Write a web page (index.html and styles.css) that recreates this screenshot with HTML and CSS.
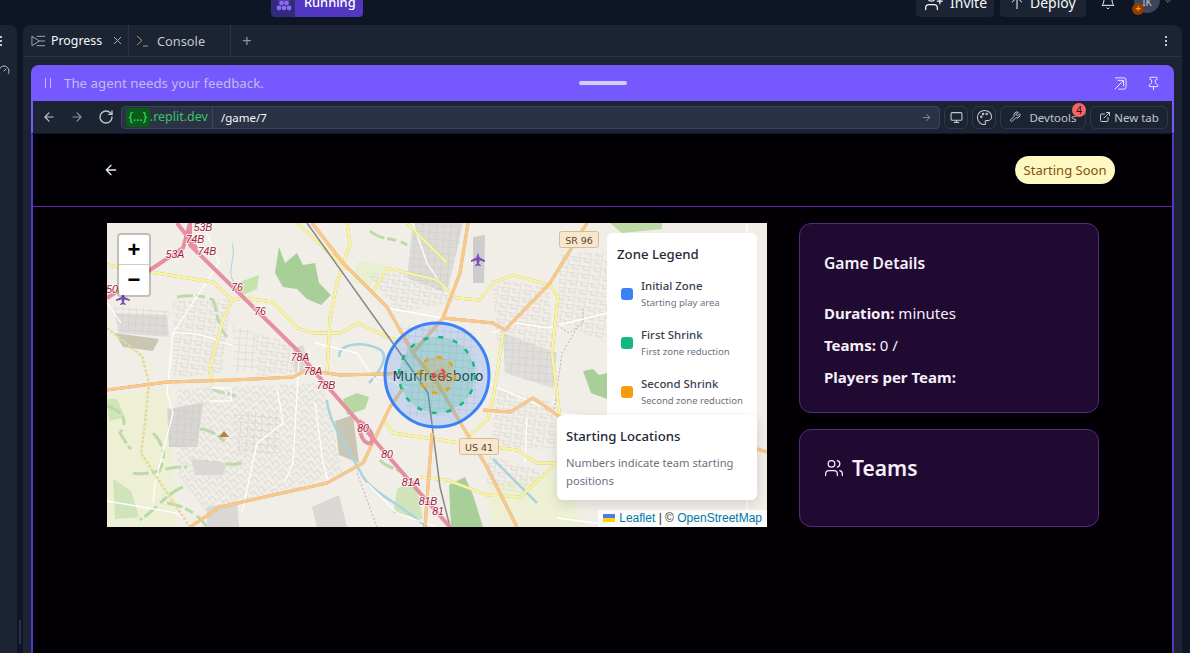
FILE: index.html
```html
<!DOCTYPE html>
<html lang="en">
<head>
    <meta charset="UTF-8">
    <meta name="viewport" content="width=device-width, initial-scale=1.0">
    <title>Game 7</title>
    <link rel="stylesheet" href="styles.css">
</head>
<body>
    <header class="topbar">
        <div class="run-button">
            <span class="run-icon">
                <svg width="16" height="16" viewBox="0 0 16 16" fill="#8a6cf5"><circle cx="3" cy="3" r="2.4"/><circle cx="8" cy="3" r="2.4"/><circle cx="13" cy="3" r="2.4"/><circle cx="5.5" cy="8" r="2.4"/><circle cx="10.5" cy="8" r="2.4"/><circle cx="3" cy="13" r="2.4"/><circle cx="8" cy="13" r="2.4"/><circle cx="13" cy="13" r="2.4"/></svg>
            </span>
            <span class="run-label">Running</span>
        </div>
        <div class="top-actions">
            <div class="top-button invite-button">
                <svg class="icon thin" width="20" height="20" viewBox="0 0 24 24"><path d="M16 21v-2a4 4 0 0 0-4-4H6a4 4 0 0 0-4 4v2"/><circle cx="9" cy="7" r="4"/><path d="M19 8v6M22 11h-6"/></svg>
                <span>Invite</span>
            </div>
            <div class="top-button deploy-button">
                <svg class="icon thin" width="16" height="18" viewBox="0 0 24 24"><path d="M12 22V8M5 12l7-7 7 7M3 5h4M17 5h4"/></svg>
                <span>Deploy</span>
            </div>
            <svg class="icon thin bell" width="16" height="16" viewBox="0 0 24 24"><path d="M6 8a6 6 0 0 1 12 0c0 7 3 9 3 9H3s3-2 3-9"/><path d="M10.3 21a1.94 1.94 0 0 0 3.4 0"/></svg>
            <div class="avatar"><span>IK</span><i class="avatar-dot">+</i></div>
            <svg class="icon chevron" width="10" height="10" viewBox="0 0 24 24"><path d="M6 9l6 6 6-6"/></svg>
        </div>
    </header>

    <div class="workspace">
        <aside class="side-panel">
            <div class="side-dots"><i></i><i></i><i></i></div>
            <svg class="icon side-gauge" width="12" height="12" viewBox="0 0 24 24"><path d="M12 14l4-4"/><path d="M3.3 19a10 10 0 1 1 17.4 0"/></svg>
        </aside>
        <div class="side-gutter"><i class="scroll-thumb"></i></div>

        <main class="main-panel">
            <nav class="tabs">
                <div class="tab tab-progress">
                    <svg class="tab-icon" width="15" height="12" viewBox="0 0 16 12"><path d="M1 1l8 5-8 5zM6 1h9M9 6h6M6 11h9"/></svg>
                    <span class="tab-name active">Progress</span>
                    <svg class="tab-close" width="9" height="9" viewBox="0 0 9 9"><path d="M1 1l7 7M8 1L1 8"/></svg>
                </div>
                <div class="tab tab-console">
                    <svg class="tab-icon console-icon" width="12" height="12" viewBox="0 0 12 12"><path d="M1 1l5 4.5L1 10M7 11h5"/></svg>
                    <span class="tab-name">Console</span>
                </div>
                <div class="tab-add">+</div>
                <div class="tab-menu"><i></i><i></i><i></i></div>
            </nav>

            <section class="preview">
                <div class="agent-bar">
                    <svg class="pause" width="8" height="12" viewBox="0 0 8 12"><path d="M1.5 1v10M6.5 1v10"/></svg>
                    <span class="agent-text">The agent needs your feedback.</span>
                    <i class="agent-grip"></i>
                    <svg class="icon thin agent-open" width="15" height="15" viewBox="0 0 24 24"><path d="M4 3h13a4 4 0 0 1 4 4v10a4 4 0 0 1-4 4H9"/><path d="M3 21L17 7M8 7h9v9"/></svg>
                    <svg class="icon thin agent-pin" width="15" height="15" viewBox="0 0 24 24"><path d="M12 17v5"/><path d="M9 10.76a2 2 0 0 1-1.11 1.79l-1.78.9A2 2 0 0 0 5 15.24V16a1 1 0 0 0 1 1h12a1 1 0 0 0 1-1v-.76a2 2 0 0 0-1.11-1.79l-1.78-.9A2 2 0 0 1 15 10.76V7a1 1 0 0 1 1-1 2 2 0 0 0 0-4H8a2 2 0 0 0 0 4 1 1 0 0 1 1 1z"/></svg>
                </div>

                <div class="browser-bar">
                    <svg class="icon nav" width="14" height="14" viewBox="0 0 24 24"><path d="M19 12H5M12 19l-7-7 7-7"/></svg>
                    <svg class="icon nav dim" width="14" height="14" viewBox="0 0 24 24"><path d="M5 12h14M12 5l7 7-7 7"/></svg>
                    <svg class="icon nav" width="16" height="16" viewBox="0 0 24 24"><path d="M21 12a9 9 0 1 1-9-9c2.52 0 4.93 1 6.74 2.74L21 8"/><path d="M21 3v5h-5"/></svg>
                    <div class="url-box">
                        <span class="url-chip">{...}</span>
                        <span class="url-host">.replit.dev</span>
                        <span class="url-path">/game/7</span>
                        <svg class="icon url-go" width="11" height="11" viewBox="0 0 24 24"><path d="M5 12h14M12 5l7 7-7 7"/></svg>
                    </div>
                    <div class="bar-button square">
                        <svg class="icon" width="13" height="13" viewBox="0 0 24 24"><rect x="2" y="3" width="20" height="14" rx="2"/><path d="M8 21h8M12 17v4"/></svg>
                    </div>
                    <div class="bar-button square">
                        <svg class="icon thin" width="17" height="17" viewBox="0 0 24 24"><path d="M12 2C6.5 2 2 6.5 2 12s4.5 10 10 10c.926 0 1.648-.746 1.648-1.688 0-.437-.18-.835-.437-1.125-.29-.289-.438-.652-.438-1.125a1.64 1.64 0 0 1 1.668-1.668h1.996c3.051 0 5.555-2.503 5.555-5.554C21.965 6.012 17.461 2 12 2z"/><circle cx="7.5" cy="11" r="1"/><circle cx="10" cy="7" r="1"/><circle cx="15" cy="7" r="1"/></svg>
                    </div>
                    <div class="bar-button devtools">
                        <svg class="icon" width="12" height="12" viewBox="0 0 24 24"><path d="M14.7 6.3a1 1 0 0 0 0 1.4l1.6 1.6a1 1 0 0 0 1.4 0l3.77-3.77a6 6 0 0 1-7.94 7.94l-6.91 6.91a2.12 2.12 0 0 1-3-3l6.91-6.91a6 6 0 0 1 7.94-7.94l-3.76 3.76z"/></svg>
                        <span>Devtools</span>
                        <b class="count">4</b>
                    </div>
                    <div class="bar-button newtab">
                        <svg class="icon" width="12" height="12" viewBox="0 0 24 24"><path d="M18 13v6a2 2 0 0 1-2 2H5a2 2 0 0 1-2-2V8a2 2 0 0 1 2-2h6M15 3h6v6M10 14L21 3"/></svg>
                        <span>New tab</span>
                    </div>
                </div>

                <div class="webview">
                    <div class="game-header">
                        <svg class="back" width="16" height="16" viewBox="0 0 24 24"><path d="M19 12H5M12 19l-7-7 7-7"/></svg>
                        <span class="status-badge">Starting Soon</span>
                    </div>

                    <div class="game-body">
                        <div class="map">
                            <svg class="map-tiles" width="660" height="304" viewBox="0 0 660 304">
                                <defs>
                                    <pattern id="streets" width="11" height="8" patternUnits="userSpaceOnUse" patternTransform="rotate(8)">
                                        <path d="M0 0H11M0 0V8M5 0V4M5 4H11" stroke="#d2d0cc" stroke-width=".8" fill="none"/>
                                    </pattern>
                                    <pattern id="streets2" width="9" height="11" patternUnits="userSpaceOnUse" patternTransform="rotate(-38)">
                                        <path d="M0 0H9M0 0V11M0 5H5M5 5V11" stroke="#d2d0cc" stroke-width=".8" fill="none"/>
                                    </pattern>
                                    <pattern id="streets3" width="7" height="7" patternUnits="userSpaceOnUse" patternTransform="rotate(4)">
                                        <path d="M0 0H7M0 0V7" stroke="#c4c2bf" stroke-width=".7" fill="none"/>
                                    </pattern>
                                </defs>
                                <g class="tiles">
                                    <rect width="660" height="304" fill="#f1eee8"/>

                                    <!-- farmland and woods -->
                                    <path fill="#eef0d5" d="M0 172L62 165L70 304H0z"/>
                                    <path fill="#eef0d5" d="M382 262L450 250L480 304H382z"/>
                                    <path fill="#e8f0cf" d="M250 38L280 42L262 64L246 60z"/>
                                    <path fill="#a9cf99" d="M172 24L178 40L190 30L196 42L208 40L212 60L224 72L214 82L200 76L190 66L176 64L168 50z"/>
                                    <path fill="#c6e2ad" d="M130 60L152 52L150 66L136 72z"/>
                                    <path fill="#bcd9a6" d="M503 0H555V6L515 10z"/>
                                    <path fill="#a9cf99" d="M476 148L486 146L492 152L500 150V176L484 170z"/>
                                    <path fill="#a9cf99" d="M342 262L358 254L366 272L376 304H344z"/>
                                    <path fill="#cfe4b8" d="M0 176H10L18 194L2 198z"/>
                                    <path fill="#cfe4b8" d="M6 256L24 268L32 294L8 296z"/>
                                    <path fill="#b8d8a2" d="M236 176L250 170L262 174L258 186L240 192z"/>
                                    <path fill="#cfe4b8" d="M290 266L308 256L316 296L286 290z"/>

                                    <g class="wood-strips">
                                        <path d="M70 74C90 70 104 76 106 77C112 90 108 100 120 114"/>
                                        <path d="M0 183C10 186 24 194 13 210C18 218 20 222 24 226"/>
                                        <path d="M86 240C104 236 120 244 136 240"/>
                                        <path d="M26 250C44 254 60 242 80 244"/>
                                        <path d="M76 264C60 270 52 284 33 297"/>
                                        <path d="M93 206C104 206 112 214 120 220"/>
                                        <path d="M103 164C112 172 120 168 130 174"/>
                                        <path d="M273 237C280 246 292 244 300 254"/>
                                        <path d="M46 210C56 220 62 236 50 250"/>
                                        <path d="M60 280C76 282 90 290 100 304"/>
                                        <path d="M330 4C334 14 344 14 352 20"/>
                                        <path d="M263 8C274 18 288 14 300 22"/>
                                    </g>

                                    <!-- built up areas -->
                                    <path fill="#dddbd7" d="M8 90L60 92L62 114L12 110z"/>
                                    <path fill="url(#streets3)" d="M8 82L62 88L60 112L10 108z"/>
                                    <path fill="#c9c7b4" d="M8 110L52 116L46 128L16 124z"/>
                                    <path fill="url(#streets)" d="M66 78L126 76L116 150L66 155z"/>
                                    <path fill="url(#streets3)" d="M126 100L148 110L150 146L128 150z"/>
                                    <path fill="url(#streets)" d="M148 110L186 120L200 148L150 154z"/>
                                    <path fill="url(#streets2)" d="M70 166L216 160L236 250L100 292L70 250z"/>
                                    <path fill="url(#streets3)" d="M126 190L172 188L174 230L130 232z"/>
                                    <path fill="url(#streets)" d="M260 50L333 50L350 78L290 90z"/>
                                    <path fill="#dddbd7" d="M306 0H356L340 70L300 55z"/>
                                    <path fill="url(#streets3)" d="M306 0H356L340 70L300 55z"/>
                                    <path fill="url(#streets)" d="M385 56L442 64L446 135L390 120z"/>
                                    <path fill="url(#streets3)" d="M293 100L368 110L372 190L300 195z"/>
                                    <path fill="url(#streets)" d="M390 166L446 180L448 226L385 224z"/>
                                    <path fill="url(#streets)" d="M380 232L440 250L410 270L380 262z"/>
                                    <path fill="#e0dedb" d="M396 110L450 130L446 165L398 150z"/>
                                    <path fill="url(#streets3)" d="M396 110L450 130L446 165L398 150z"/>
                                    <path fill="url(#streets)" d="M452 30L500 30V120L452 100z"/>
                                    <path fill="#c9c7b4" d="M228 198L246 192L252 240L232 232z"/>
                                    <path fill="#d8d6d2" d="M60 186L96 180L90 224L62 224z"/>
                                    <path fill="url(#streets3)" d="M60 186L96 180L90 224L62 224z"/>
                                    <path fill="#dad8d4" d="M205 284L232 272L240 304H210z"/>
                                    <path fill="#dad8d4" d="M100 284L130 280L132 304H100z"/>
                                    <path fill="#dad8d4" d="M84 236L120 240L116 252L88 252z"/>
                                    <path fill="#dad8d4" d="M186 126L196 122L204 150L188 150z"/>
                                    <path fill="#cdcdcd" d="M366 14L378 12L377 60L366 60z"/>

                                    <!-- water -->
                                    <path class="water" d="M232 134C232 120 255 118 272 126C284 132 272 150 262 160"/>
                                    <path class="water" d="M220 177C222 200 240 225 254 250C262 268 286 276 320 304"/>
                                    <path class="water thin-water" d="M125 20C130 35 118 50 128 60"/>
                                    <path class="water" d="M386 236L430 280"/>

                                    <!-- small roads -->
                                    <g class="road-white">
                                        <path d="M66 110C100 108 110 120 125 122"/>
                                        <path d="M66 110L60 170L66 190L48 260L46 280"/>
                                        <path d="M0 278L70 290L86 304"/>
                                        <path d="M96 0L112 40L66 110"/>
                                        <path d="M192 135L186 240L178 258"/>
                                        <path d="M170 165L176 200L150 220L135 290"/>
                                        <path d="M208 180L216 240L222 260"/>
                                        <path d="M208 120L250 130L270 160"/>
                                        <path d="M280 85L335 95"/>
                                        <path d="M0 80L14 100"/>
                                        <path d="M263 150L300 165"/>
                                        <path d="M385 110L410 100L440 105L500 90"/>
                                        <path d="M380 160L450 190L500 195"/>
                                        <path d="M420 195L418 240"/>
                                        <path d="M306 0L320 40L340 70"/>
                                        <path d="M260 260L290 290L330 304"/>
                                        <path d="M450 295L520 304M640 0V304"/>
                                        <path d="M103 165H124V178H103"/>
                                    </g>
                                    <path class="track" d="M447 100L462 110L476 100L476 85"/>
                                    <path class="track" d="M447 190L455 130L470 105M250 250L270 304"/>

                                    <!-- trunk and secondary roads -->
                                    <g class="road-yellow">
                                        <path d="M0 42L43 49L106 59L125 77L136 75L166 79L190 105L206 110L233 110L251 100L280 114L293 118"/>
                                        <path d="M125 77L116 97L103 144L106 162"/>
                                        <path d="M240 0L243 20L230 60L223 94L220 150"/>
                                        <path d="M266 69L280 45L330 57L350 75L373 77L386 60L406 52L443 62L451 74L445 130L453 194"/>
                                        <path d="M396 110L386 177L380 197L363 212"/>
                                        <path d="M276 197L286 210L346 219L410 227L430 240L450 240L413 274L380 272L340 257L313 254"/>
                                        <path d="M300 0L340 40"/>
                                        <path d="M190 0L240 46"/>
                                    </g>
                                    <path class="road-yellow-dash" d="M0 105L35 133L42 160L38 200L34 230L60 270L83 304"/>

                                    <!-- railway -->
                                    <path class="rail" d="M200 0L293 130L321 170L333 264L343 304"/>

                                    <!-- primary roads -->
                                    <g class="road-orange">
                                        <path d="M0 167L60 159L126 157L186 154L200 147L233 152L276 151L300 150"/>
                                        <path d="M205 0L236 40L280 84L306 130L330 160L356 204L380 244L410 304"/>
                                        <path d="M361 0L353 50L336 95L306 130"/>
                                        <path d="M336 95L386 100L398 107L443 60L480 0"/>
                                        <path d="M83 304L113 284L220 260L256 240L283 184L296 165"/>
                                        <path d="M325 210L318 304"/>
                                        <path d="M376 187L403 189L426 175L453 194"/>
                                        <path d="M650 226L660 229"/>
                                    </g>

                                    <!-- motorway -->
                                    <g class="road-motorway">
                                        <path d="M0 75L43 47L76 25L83 0"/>
                                        <path d="M83 0L83 22L190 127L206 147L256 204L313 270L343 304"/>
                                        <path d="M70 0L90 26"/>
                                        <path d="M252 198C262 204 268 212 264 220C256 222 252 210 252 198"/>
                                    </g>

                                    <!-- symbols -->
                                    <path class="plane" d="M371 30l1.6 4.5 5.4 2.8v1.6l-5.4-1.6-.6 3.5 1.8 1.500v1l-2.800-.8-2.800.8v-1l1.800-1.500-.6-3.500-5.400 1.600v-1.600l5.400-2.800z"/>
                                    <path class="plane" d="M16 70l1.6 4 5.4 2.500v1.500l-5.400-1.500-.6 3 1.800 1.500v1l-2.800-.8-2.800.8v-1l1.800-1.500-.6-3-5.400 1.500v-1.500l5.400-2.500z"/>
                                    <path fill="#b98044" d="M117 208l5 6h-10z"/>
                                </g>

                                <g class="junction">
                                    <text x="96" y="8">53B</text>
                                    <text x="88" y="20">74B</text>
                                    <text x="100" y="32">74B</text>
                                    <text x="68" y="35">53A</text>
                                    <text x="5" y="70">50</text>
                                    <text x="130" y="68">76</text>
                                    <text x="153" y="92">76</text>
                                    <text x="193" y="138">78A</text>
                                    <text x="206" y="152">78A</text>
                                    <text x="219" y="166">78B</text>
                                    <text x="256" y="209">80</text>
                                    <text x="280" y="235">80</text>
                                    <text x="304" y="263">81A</text>
                                    <text x="321" y="282">81B</text>
                                    <text x="331" y="292">81</text>
                                </g>

                                <g class="shield">
                                    <rect x="452.5" y="8.5" width="39" height="16" rx="2"/>
                                    <text x="472" y="20.5">SR 96</text>
                                    <rect x="352.5" y="215.5" width="39" height="16" rx="2"/>
                                    <text x="372" y="227.5">US 41</text>
                                </g>

                                <text class="city" x="331" y="158">Murfreesboro</text>

                                <circle class="zone-blue" cx="330" cy="152" r="52"/>
                                <circle class="zone-green" cx="330" cy="152" r="38"/>
                                <circle class="zone-orange" cx="330" cy="152" r="18"/>
                                <circle class="zone-red" cx="332" cy="152" r="6"/>
                            </svg>

                            <div class="zoom-control">
                                <div class="zoom-btn">+</div>
                                <div class="zoom-btn">&minus;</div>
                            </div>

                            <div class="legend">
                                <h3>Zone Legend</h3>
                                <div class="legend-row">
                                    <i class="swatch swatch-blue"></i>
                                    <div><p class="legend-name">Initial Zone</p><p class="legend-note">Starting play area</p></div>
                                </div>
                                <div class="legend-row">
                                    <i class="swatch swatch-green"></i>
                                    <div><p class="legend-name">First Shrink</p><p class="legend-note">First zone reduction</p></div>
                                </div>
                                <div class="legend-row">
                                    <i class="swatch swatch-orange"></i>
                                    <div><p class="legend-name">Second Shrink</p><p class="legend-note">Second zone reduction</p></div>
                                </div>
                            </div>

                            <div class="locations">
                                <h3>Starting Locations</h3>
                                <p>Numbers indicate team starting positions</p>
                            </div>

                            <div class="attribution">
                                <svg width="12" height="8" viewBox="0 0 12 8"><rect width="12" height="4" fill="#4c7be1"/><rect y="4" width="12" height="4" fill="#ffd500"/></svg>
                                <a>Leaflet</a> <span class="attr-sep">|</span> &copy; <a>OpenStreetMap</a>
                            </div>
                        </div>

                        <div class="side-cards">
                            <div class="card details-card">
                                <h2>Game Details</h2>
                                <p><strong>Duration:</strong> minutes</p>
                                <p><strong>Teams:</strong> 0 /</p>
                                <p><strong>Players per Team:</strong></p>
                            </div>
                            <div class="card teams-card">
                                <h2>
                                    <svg class="icon thin" width="20" height="20" viewBox="0 0 24 24"><path d="M16 21v-2a4 4 0 0 0-4-4H6a4 4 0 0 0-4 4v2"/><circle cx="9" cy="7" r="4"/><path d="M22 21v-2a4 4 0 0 0-3-3.87"/><path d="M16 3.13a4 4 0 0 1 0 7.75"/></svg>
                                    Teams
                                </h2>
                            </div>
                        </div>
                    </div>
                </div>
            </section>
        </main>
    </div>
</body>
</html>
```

FILE: styles.css
```css
* {
    box-sizing: border-box;
}
body {
    font-family: 'Noto Sans', 'Open Sans', sans-serif;
    background-color: #0e1525;
    color: #f5f9fc;
    margin: 0;
    width: 100vw;
    height: 100vh;
    overflow: hidden;
    display: flex;
    flex-direction: column;
}
h2, h3, p {
    margin: 0;
}
.icon {
    fill: none;
    stroke: currentColor;
    stroke-width: 2;
    stroke-linecap: round;
    stroke-linejoin: round;
    flex-shrink: 0;
}
.icon.thin {
    stroke-width: 1.5;
}

/* top bar, cut off by the window edge */
.topbar {
    height: 25px;
    flex-shrink: 0;
    overflow: hidden;
    display: flex;
    align-items: flex-end;
    padding: 0 17px 8px 271px;
}
.run-button {
    display: flex;
    height: 30px;
    border-radius: 4px;
    overflow: hidden;
    flex-shrink: 0;
}
.run-icon {
    width: 24px;
    background-color: #332a7c;
    display: flex;
    align-items: center;
    justify-content: center;
}
.run-icon svg {
    margin-top: 1px;
    margin-left: 1px;
}
.run-label {
    width: 68px;
    background-color: #5237c2;
    color: #fff;
    font-size: 12.8px;
    font-weight: 500;
    line-height: 30px;
    padding-left: 9px;
}
.top-actions {
    margin-left: auto;
    display: flex;
    align-items: flex-end;
}
.top-button {
    height: 30px;
    background-color: #1c2333;
    border-radius: 4px;
    display: flex;
    align-items: center;
    font-size: 14px;
}
.invite-button {
    width: 78px;
    gap: 6px;
    padding-left: 8px;
}
.deploy-button {
    width: 86px;
    gap: 5px;
    padding-left: 9px;
    margin-left: 6px;
}
.bell {
    margin: 0 0 7px 14px;
}
.avatar {
    position: relative;
    width: 26px;
    height: 26px;
    border-radius: 50%;
    background-color: #3c445c;
    color: #c2c8cc;
    font-size: 10px;
    line-height: 30px;
    text-align: center;
    margin-left: 18px;
    margin-bottom: 4px;
}
.avatar-dot {
    position: absolute;
    left: -2px;
    top: 16px;
    width: 12px;
    height: 12px;
    border-radius: 50%;
    background-color: #8f3d00;
    color: #ff9a2e;
    font-style: normal;
    font-size: 10px;
    font-weight: 700;
    line-height: 11px;
}
.chevron {
    color: #8a92a8;
    margin: 0 0 11px 3px;
}

.workspace {
    flex: 1;
    min-height: 0;
    display: flex;
    padding-right: 8px;
}
.side-panel {
    width: 17px;
    background-color: #1c2333;
    border-radius: 0 8px 0 0;
    flex-shrink: 0;
    overflow: hidden;
    padding-top: 11px;
}
.side-dots {
    display: flex;
    flex-direction: column;
    gap: 2px;
}
.side-dots i {
    width: 2px;
    height: 2px;
    background-color: #c2c8cc;
}
.side-gauge {
    display: block;
    margin: 18px 0 0 -2px;
    color: #c2c8cc;
}
.side-gutter {
    width: 6px;
    flex-shrink: 0;
    position: relative;
}
.scroll-thumb {
    position: absolute;
    left: 2px;
    top: 595px;
    width: 2px;
    height: 24px;
    background-color: #2b3245;
}

.main-panel {
    flex: 1;
    min-width: 0;
    background-color: #1c2333;
    border-radius: 8px 8px 0 0;
    display: flex;
    flex-direction: column;
}
.tabs {
    height: 32px;
    flex-shrink: 0;
    display: flex;
    border-bottom: 1px solid #2b3245;
    font-size: 12.8px;
}
.tab {
    display: flex;
    align-items: center;
    border-right: 1px solid #2b3245;
}
.tab-progress {
    width: 106px;
    padding-left: 8px;
}
.tab-console {
    width: 102px;
    padding-left: 7px;
}
.tab-icon {
    fill: none;
    stroke: #a5adc0;
    stroke-width: 1;
    margin-right: 5px;
}
.console-icon {
    stroke: #a89a70;
    margin-right: 9px;
}
.tab-name {
    color: #c2c8cc;
}
.tab-name.active {
    color: #f5f9fc;
    font-size: 12.4px;
}
.tab-close {
    fill: none;
    stroke: #a5adc0;
    margin-left: 11px;
}
.tab-add {
    color: #8a92a8;
    font-size: 17px;
    line-height: 31px;
    margin-left: 11px;
}
.tab-menu {
    margin-left: auto;
    width: 32px;
    display: flex;
    flex-direction: column;
    align-items: center;
    justify-content: center;
    gap: 2px;
}
.tab-menu i {
    width: 2px;
    height: 2px;
    background-color: #c2c8cc;
}

.preview {
    flex: 1;
    min-height: 0;
    margin: 8px 8px 0;
    border-radius: 8px 8px 0 0;
    background-color: #7559ff;
    display: flex;
    flex-direction: column;
}
.agent-bar {
    height: 36px;
    flex-shrink: 0;
    display: flex;
    align-items: center;
    padding-left: 13px;
    position: relative;
}
.pause {
    fill: none;
    stroke: #c6bcf5;
    margin-right: 12px;
}
.agent-text {
    color: #c3b9ee;
    font-size: 13.3px;
}
.agent-grip {
    position: absolute;
    left: 548px;
    top: 16px;
    width: 48px;
    height: 4px;
    border-radius: 2px;
    background-color: #d4ccfa;
}
.agent-open {
    margin-left: auto;
    color: #f0eeff;
}
.agent-pin {
    margin: 0 13px 0 18px;
    color: #f0eeff;
}
.browser-bar {
    height: 33px;
    flex-shrink: 0;
    margin: 0 2px;
    background-color: #1c2333;
    border-bottom: 1px solid #0e1525;
    display: flex;
    align-items: center;
    padding: 0 4px 0 9px;
}
.nav {
    color: #c2c8cc;
    margin-right: 14px;
}
.nav.dim {
    color: #8a92a8;
}
.nav:nth-child(3) {
    margin-right: 7px;
}
.url-box {
    flex: 1;
    min-width: 0;
    height: 23px;
    background-color: #2b3245;
    border: 1px solid #3c445c;
    border-radius: 4px;
    display: flex;
    align-items: center;
    font-size: 12.5px;
    padding-left: 4px;
}
.url-chip {
    background-color: #0b5c1a;
    color: #3fe06a;
    border-radius: 3px;
    height: 19px;
    line-height: 18px;
    padding: 0 2.5px;
    font-size: 12px;
}
.url-host {
    color: #3ac46a;
    padding-right: 4px;
    border-right: 1px solid #3c445c;
    height: 21px;
    line-height: 20px;
}
.url-path {
    color: #f5f9fc;
    margin-left: 8px;
    font-size: 11.5px;
}
.url-go {
    margin-left: auto;
    margin-right: 7px;
    color: #8a92a8;
}
.bar-button {
    height: 23px;
    border: 1px solid #2f374c;
    border-radius: 6px;
    display: flex;
    align-items: center;
    justify-content: center;
    color: #c2c8cc;
    font-size: 11.5px;
    margin-left: 4px;
    position: relative;
}
.bar-button.square {
    width: 24px;
}
.devtools {
    width: 86px;
    gap: 8px;
}
.newtab {
    width: 78px;
    gap: 3px;
}
.count {
    position: absolute;
    right: -1px;
    top: -4px;
    width: 14px;
    height: 14px;
    border-radius: 50%;
    background-color: #f56565;
    color: #2a0d10;
    font-size: 10px;
    font-weight: 400;
    line-height: 14px;
    text-align: center;
}

.webview {
    flex: 1;
    min-height: 0;
    background-color: #020005;
    border-left: 2px solid #5138c8;
    border-right: 2px solid #5138c8;
    margin-top: -1px;
    border-top: 1px solid #0e1525;
}
.game-header {
    height: 73px;
    border-bottom: 1px solid #6b21a8;
    display: flex;
    align-items: center;
    justify-content: space-between;
    padding: 0 57px 0 70px;
}
.back {
    fill: none;
    stroke: #e8e6f0;
    stroke-width: 2;
    stroke-linecap: round;
    stroke-linejoin: round;
}
.status-badge {
    background-color: #fef9c3;
    color: #854d0e;
    border-radius: 14px;
    height: 28px;
    width: 100px;
    font-size: 13px;
    line-height: 28px;
    text-align: center;
}
.game-body {
    display: flex;
    gap: 32px;
    padding: 16px 0 0 74px;
}

/* map */
.map {
    width: 660px;
    height: 304px;
    position: relative;
    overflow: hidden;
    flex-shrink: 0;
    background-color: #f1eee8;
}
.map-tiles {
    display: block;
}
.tiles {
    filter: blur(.3px);
}
.wood-strips path {
    fill: none;
    stroke: #bcdaa8;
    stroke-width: 3;
    stroke-dasharray: 16 3 9 5;
    stroke-linejoin: round;
}
.water {
    fill: none;
    stroke: #aad3df;
    stroke-width: 2.5;
}
.water.thin-water {
    stroke-width: 1;
}
.road-white path {
    fill: none;
    stroke: #fff;
    stroke-width: 1.3;
}
.track {
    fill: none;
    stroke: #c9a6c4;
    stroke-width: 1;
    stroke-dasharray: 2 2;
}
.road-yellow {
    filter: drop-shadow(0 0 .4px #b0aa70);
}
.road-yellow path {
    fill: none;
    stroke: #f7f3a5;
    stroke-width: 2.8;
    stroke-linejoin: round;
}
.road-yellow-dash {
    fill: none;
    stroke: #e0dc9a;
    stroke-width: 2.5;
    stroke-dasharray: 3 1.5;
}
.rail {
    fill: none;
    stroke: #888;
    stroke-width: 1.5;
}
.road-orange {
    filter: drop-shadow(0 0 .4px #c89a60);
}
.road-orange path {
    fill: none;
    stroke: #f9c88c;
    stroke-width: 3;
    stroke-linejoin: round;
}
.road-motorway path {
    fill: none;
    stroke: #e58fa1;
    stroke-width: 4;
    stroke-linejoin: round;
}
.plane {
    fill: #7a4fb0;
}
.junction text {
    font-family: 'Liberation Sans', Arial, sans-serif;
    font-size: 10.5px;
    font-style: italic;
    fill: #a0163a;
    stroke: #fff;
    stroke-width: 2;
    stroke-opacity: .75;
    paint-order: stroke;
    text-anchor: middle;
}
.shield rect {
    fill: #f6e7cd;
    stroke: #d8bd94;
}
.shield text {
    font-family: 'DejaVu Sans', sans-serif;
    font-size: 9.5px;
    fill: #5a4630;
    text-anchor: middle;
}
.city {
    font-family: 'DejaVu Sans', sans-serif;
    font-size: 13.7px;
    fill: #222;
    stroke: #fff;
    stroke-width: 2;
    stroke-opacity: .6;
    paint-order: stroke;
    text-anchor: middle;
}
.zone-blue {
    fill: rgba(59, 130, 246, .22);
    stroke: #3b82f6;
    stroke-width: 3;
}
.zone-green {
    fill: rgba(16, 185, 129, .18);
    stroke: #10b981;
    stroke-width: 2.5;
    stroke-dasharray: 5 10;
}
.zone-orange {
    fill: rgba(245, 158, 11, .2);
    stroke: #f59e0b;
    stroke-width: 2.5;
    stroke-dasharray: 5 9;
}
.zone-red {
    fill: rgba(239, 68, 68, .2);
    stroke: #ef4444;
    stroke-width: 2.5;
    stroke-dasharray: 5 10;
}
.zoom-control {
    position: absolute;
    left: 10px;
    top: 10px;
    width: 34px;
    border: 2px solid rgba(0, 0, 0, .2);
    border-radius: 4px;
    background-clip: padding-box;
}
.zoom-btn {
    height: 30px;
    background-color: #fff;
    color: #000;
    font-family: 'Liberation Sans', Arial, sans-serif;
    font-size: 22px;
    font-weight: 700;
    line-height: 29px;
    text-align: center;
}
.zoom-btn:first-child {
    border-bottom: 1px solid #ccc;
    border-radius: 2px 2px 0 0;
}
.zoom-btn:last-child {
    border-radius: 0 0 2px 2px;
}
.legend {
    position: absolute;
    left: 500px;
    top: 10px;
    width: 150px;
    height: 210px;
    background-color: #fff;
    border-radius: 6px;
    padding: 12px 10px;
    color: #374151;
}
.legend h3 {
    color: #1f2937;
    font-size: 13.2px;
    font-weight: 500;
    line-height: 18px;
    margin-bottom: 6px;
}
.legend-row {
    display: flex;
    align-items: center;
    gap: 8px;
    height: 49px;
    padding-left: 4px;
}
.swatch {
    width: 12px;
    height: 12px;
    border-radius: 3px;
    flex-shrink: 0;
}
.swatch-blue {
    background-color: #3b82f6;
}
.swatch-green {
    background-color: #10b981;
}
.swatch-orange {
    background-color: #f59e0b;
}
.legend-name {
    font-size: 11.4px;
    font-weight: 500;
    line-height: 17px;
}
.legend-note {
    font-size: 9.5px;
    color: #6b7280;
    line-height: 17px;
}
.locations {
    position: absolute;
    left: 450px;
    top: 192px;
    width: 200px;
    height: 85px;
    background-color: #fff;
    border-radius: 6px;
    padding: 12px 9px;
    box-shadow: 0 4px 12px rgba(0, 0, 0, .12);
}
.locations h3 {
    color: #1f2937;
    font-size: 13.2px;
    font-weight: 500;
    line-height: 18px;
    margin-bottom: 9px;
}
.locations p {
    color: #6b7280;
    font-size: 11.2px;
    line-height: 18px;
}
.attribution {
    position: absolute;
    right: 0;
    bottom: 0;
    background-color: rgba(255, 255, 255, .8);
    color: #333;
    font-family: 'Liberation Sans', Arial, sans-serif;
    font-size: 12px;
    line-height: 17px;
    padding: 0 5px;
}
.attribution a {
    color: #0078a8;
}
.attribution svg {
    margin-right: 1px;
}

/* right hand cards */
.side-cards {
    width: 300px;
    display: flex;
    flex-direction: column;
    gap: 16px;
}
.card {
    background-color: #210a31;
    border: 1px solid #552a80;
    border-radius: 12px;
    color: #f5f0fa;
    padding: 0 24px;
}
.details-card {
    height: 190px;
}
.details-card h2 {
    font-size: 15.6px;
    font-weight: 600;
    line-height: 24px;
    padding-top: 27px;
    margin-bottom: 28px;
}
.details-card p {
    font-size: 15px;
    line-height: 20px;
    margin-bottom: 12px;
}
.details-card strong {
    font-weight: 700;
}
.teams-card {
    height: 98px;
}
.teams-card h2 {
    display: flex;
    align-items: center;
    gap: 8px;
    font-size: 21px;
    font-weight: 600;
    line-height: 32px;
    padding-top: 22px;
}
```
